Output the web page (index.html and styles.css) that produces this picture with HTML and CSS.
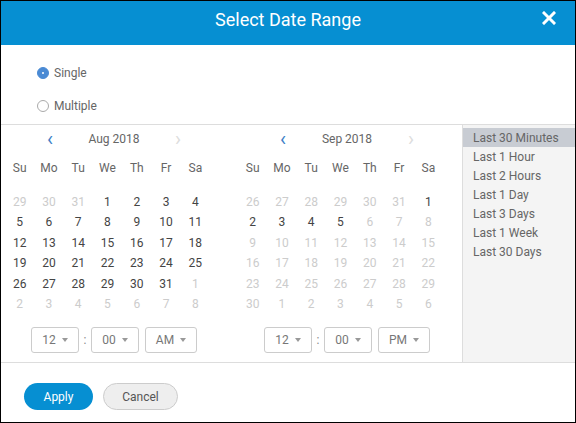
FILE: index.html
```html
<!DOCTYPE html>
<html lang="en">
<head>
    <meta charset="UTF-8">
    <meta name="viewport" content="width=device-width, initial-scale=1.0">
    <title>Select Date Range</title>
    <link rel="stylesheet" href="styles.css">
</head>
<body>
    <div class="dialog">
        <div class="dialog-header">
            <h1>Select Date Range</h1>
            <button class="close-btn" type="button" aria-label="Close">
                <svg width="14" height="14" viewBox="0 0 14 14"><path d="M2 2 L12 12 M12 2 L2 12" stroke="#fff" stroke-width="3" stroke-linecap="square"/></svg>
            </button>
        </div>

        <div class="mode-group">
            <label class="radio"><span class="radio-dot checked"></span>Single</label>
            <label class="radio"><span class="radio-dot"></span>Multiple</label>
        </div>

        <div class="dialog-body">
            <div class="calendars">
                <!-- bulan pertama -->
                <div class="calendar">
                    <div class="cal-nav">
                        <span class="chev prev">&#8249;</span>
                        <span class="cal-title">Aug 2018</span>
                        <span class="chev next">&#8250;</span>
                    </div>
                    <div class="cal-week">
                        <span>Su</span><span>Mo</span><span>Tu</span><span>We</span><span>Th</span><span>Fr</span><span>Sa</span>
                    </div>
                    <div class="cal-days">
                        <span class="off">29</span><span class="off">30</span><span class="off">31</span><span>1</span><span>2</span><span>3</span><span>4</span>
                        <span>5</span><span>6</span><span>7</span><span>8</span><span>9</span><span>10</span><span>11</span>
                        <span>12</span><span>13</span><span>14</span><span>15</span><span>16</span><span>17</span><span>18</span>
                        <span>19</span><span>20</span><span>21</span><span>22</span><span>23</span><span>24</span><span>25</span>
                        <span>26</span><span>27</span><span>28</span><span>29</span><span>30</span><span>31</span><span class="off">1</span>
                        <span class="off">2</span><span class="off">3</span><span class="off">4</span><span class="off">5</span><span class="off">6</span><span class="off">7</span><span class="off">8</span>
                    </div>
                    <div class="time-row">
                        <div class="select w48">12<i class="caret"></i></div>
                        <span class="colon">:</span>
                        <div class="select w48">00<i class="caret"></i></div>
                        <div class="select w52">AM<i class="caret"></i></div>
                    </div>
                </div>

                <!-- bulan kedua -->
                <div class="calendar">
                    <div class="cal-nav">
                        <span class="chev prev">&#8249;</span>
                        <span class="cal-title">Sep 2018</span>
                        <span class="chev next">&#8250;</span>
                    </div>
                    <div class="cal-week">
                        <span>Su</span><span>Mo</span><span>Tu</span><span>We</span><span>Th</span><span>Fr</span><span>Sa</span>
                    </div>
                    <div class="cal-days">
                        <span class="off">26</span><span class="off">27</span><span class="off">28</span><span class="off">29</span><span class="off">30</span><span class="off">31</span><span>1</span>
                        <span>2</span><span>3</span><span>4</span><span>5</span><span class="off">6</span><span class="off">7</span><span class="off">8</span>
                        <span class="off">9</span><span class="off">10</span><span class="off">11</span><span class="off">12</span><span class="off">13</span><span class="off">14</span><span class="off">15</span>
                        <span class="off">16</span><span class="off">17</span><span class="off">18</span><span class="off">19</span><span class="off">20</span><span class="off">21</span><span class="off">22</span>
                        <span class="off">23</span><span class="off">24</span><span class="off">25</span><span class="off">26</span><span class="off">27</span><span class="off">28</span><span class="off">29</span>
                        <span class="off">30</span><span class="off">1</span><span class="off">2</span><span class="off">3</span><span class="off">4</span><span class="off">5</span><span class="off">6</span>
                    </div>
                    <div class="time-row">
                        <div class="select w48">12<i class="caret"></i></div>
                        <span class="colon">:</span>
                        <div class="select w48">00<i class="caret"></i></div>
                        <div class="select w52">PM<i class="caret"></i></div>
                    </div>
                </div>
            </div>

            <ul class="presets">
                <li class="active">Last 30 Minutes</li>
                <li>Last 1 Hour</li>
                <li>Last 2 Hours</li>
                <li>Last 1 Day</li>
                <li>Last 3 Days</li>
                <li>Last 1 Week</li>
                <li>Last 30 Days</li>
            </ul>
        </div>

        <div class="dialog-footer">
            <button type="button" class="btn btn-primary">Apply</button>
            <button type="button" class="btn btn-default">Cancel</button>
        </div>
    </div>
</body>
</html>
```

FILE: styles.css
```css
body {
    margin: 0;
    font-family: "Roboto", "Liberation Sans", sans-serif;
    background-color: #fff;
}

.dialog {
    width: 576px;
    height: 423px;
    box-sizing: border-box;
    border: 1px solid #000;
    display: flex;
    flex-direction: column;
    background-color: #fff;
}

.dialog-header {
    height: 44px;
    box-sizing: border-box;
    padding-bottom: 8px;
    background-color: #068fd2;
    display: flex;
    align-items: center;
    justify-content: center;
    position: relative;
}

.dialog-header h1 {
    margin: 0;
    font-size: 18px;
    font-weight: 400;
    color: #fff;
}

.close-btn {
    position: absolute;
    right: 19px;
    top: 10px;
    width: 14px;
    height: 14px;
    padding: 0;
    border: none;
    background: none;
    display: flex;
}

.mode-group {
    height: 80px;
    box-sizing: border-box;
    padding: 18px 0 0 36px;
    display: flex;
    flex-direction: column;
    gap: 13px;
    border-bottom: 1px solid #ddd;
}

.radio {
    height: 20px;
    display: flex;
    align-items: center;
    font-size: 12px;
    color: #666;
}

.radio-dot {
    width: 10px;
    height: 10px;
    border: 1px solid #aaa;
    border-radius: 50%;
    margin-right: 5px;
    box-sizing: content-box;
    position: relative;
}

.radio-dot.checked {
    background-color: #4a8ad4;
    border-color: #4a8ad4;
}

.radio-dot.checked::after {
    content: "";
    position: absolute;
    left: 4px;
    top: 4px;
    width: 2px;
    height: 2px;
    border-radius: 50%;
    background-color: #fff;
}

.dialog-body {
    height: 237px;
    display: flex;
    border-bottom: 1px solid #ddd;
}

.calendars {
    flex: 1;
    display: flex;
    gap: 28px;
    padding: 2px 0 0 4px;
}

.calendar {
    width: 205px;
}

.cal-nav {
    height: 24px;
    display: flex;
    align-items: center;
    justify-content: space-between;
    padding: 0 28px 0 41px;
}

.chev {
    font-size: 20px;
    line-height: 20px;
    width: 8px;
    text-align: center;
}

.chev.prev {
    color: #3d7ec6;
}

.chev.next {
    color: #ddd;
}

.cal-title {
    font-size: 12px;
    color: #666;
}

.cal-week,
.cal-days {
    display: grid;
    grid-template-columns: repeat(7, 1fr);
    text-align: center;
    font-size: 12px;
}

.cal-week {
    margin-top: 5px;
    height: 24px;
    line-height: 24px;
    color: #666;
}

.cal-days {
    margin-top: 12px;
    grid-auto-rows: 20.4px;
    line-height: 20.4px;
    color: #444;
}

.cal-days .off {
    color: #ccc;
}

.time-row {
    margin-top: 12.6px;
    padding-left: 26px;
    display: flex;
    align-items: center;
}

.select {
    height: 26px;
    box-sizing: border-box;
    border: 1px solid #ccc;
    border-radius: 3px;
    display: flex;
    align-items: center;
    justify-content: center;
    font-size: 12px;
    color: #777;
}

.w48 {
    width: 48px;
}

.w52 {
    width: 52px;
    margin-left: 6px;
}

.caret {
    margin-left: 6px;
    width: 0;
    height: 0;
    border-left: 3.5px solid transparent;
    border-right: 3.5px solid transparent;
    border-top: 4px solid #999;
}

.colon {
    width: 12px;
    text-align: center;
    font-size: 12px;
    color: #888;
}

.presets {
    list-style: none;
    margin: 0;
    padding: 3px 0 0;
    width: 112px;
    border-left: 1px solid #ddd;
    background-color: #f4f4f4;
}

.presets li {
    height: 19px;
    box-sizing: border-box;
    padding: 2px 0 0 10px;
    line-height: 17px;
    font-size: 12px;
    color: #666;
}

.presets li.active {
    background-color: #c8ccd3;
}

.dialog-footer {
    flex: 1;
    display: flex;
    align-items: flex-start;
    gap: 10px;
    padding: 20px 0 0 23px;
}

.btn {
    height: 27px;
    border-radius: 14px;
    font-family: inherit;
    font-size: 12px;
    cursor: pointer;
}

.btn-primary {
    width: 69px;
    border: none;
    background-color: #068fd2;
    color: #fff;
}

.btn-default {
    width: 75px;
    border: 1px solid #ccc;
    background-color: #eee;
    color: #555;
}
```
